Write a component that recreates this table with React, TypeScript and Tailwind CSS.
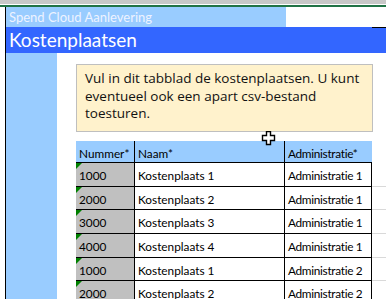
import React from 'react';

/* ------------------ Data ------------------ */
interface Row {
  nummer: string;
  naam: string;
  admin: string;
  h: string;
}

const rows: Row[] = [
  { nummer: '1000', naam: 'Kostenplaats 1', admin: 'Administratie 1', h: 'h-[24px]' },
  { nummer: '2000', naam: 'Kostenplaats 2', admin: 'Administratie 1', h: 'h-[23px]' },
  { nummer: '3000', naam: 'Kostenplaats 3', admin: 'Administratie 1', h: 'h-[24px]' },
  { nummer: '4000', naam: 'Kostenplaats 4', admin: 'Administratie 1', h: 'h-[24px]' },
  { nummer: '1000', naam: 'Kostenplaats 1', admin: 'Administratie 2', h: 'h-[23px]' },
  { nummer: '2000', naam: 'Kostenplaats 2', admin: 'Administratie 2', h: 'h-[24px]' },
];

/* ------------------ Cursor ------------------ */
function CellCursor() {
  return (
    <svg width="15" height="16" viewBox="0 0 15 16" className="absolute left-[261px] top-[131px]">
      <path
        d="M5.5 0.5 H9.5 V4.5 H13.5 V9.5 H9.5 V13.5 H5.5 V9.5 H1.5 V4.5 H5.5 Z"
        fill="#ffffff"
        stroke="#000000"
        strokeWidth="1.4"
      />
    </svg>
  );
}

/* ------------------ Tabel ------------------ */
function Table() {
  return (
    <div className="flex items-start">
      <div className="w-[296px] text-[11.8px] leading-[14px] text-black whitespace-nowrap">
        <div className="flex h-[22px] bg-[#99ccff] border-b border-black">
          <div className="w-[59px] border-r border-black pl-[3px] pt-[6px]">Nummer*</div>
          <div className="w-[150px] border-r border-black pl-[3px] pt-[6px]">Naam*</div>
          <div className="flex-1 pl-[3px] pt-[6px] tracking-[-0.3px]">Administratie*</div>
        </div>
        {rows.map((r, i) => (
          <div key={i} className={`flex border-b border-black ${r.h}`}>
            <div className="relative w-[59px] bg-[#c0c0c0] border-r border-black pl-[3px] pt-[6px]">
              <span className="absolute left-0 top-0 w-0 h-0 border-t-[6px] border-t-[#008000] border-r-[6px] border-r-transparent" />
              {r.nummer}
            </div>
            <div className="w-[150px] border-r border-black pl-[3px] pt-[6px]">{r.naam}</div>
            <div className="flex-1 border-r border-black pl-[3px] pt-[6px] tracking-[-0.3px]">{r.admin}</div>
          </div>
        ))}
      </div>
      <div className="flex-1 pt-[22px]">
        {rows.map((r, i) => (
          <div key={i} className={`border-b border-[#d9d9d9] ${r.h}`} />
        ))}
      </div>
    </div>
  );
}

/* ------------------ Pagina ------------------ */
export default function App() {
  return (
    <div
      className="relative w-[386px] h-[299px] overflow-hidden bg-white"
      style={{ fontFamily: 'Lato, "Open Sans", sans-serif' }}
    >
      <div className="h-[4px] bg-[#c8c8c8]" />
      <div className="h-[1px] bg-white" />
      <div className="h-[2px] bg-[#217346]" />

      <div className="flex h-[292px]">
        <div className="w-[5px] bg-white" />
        <div className="w-[1px] bg-black" />
        <div className="flex-1 flex flex-col">
          <div className="flex h-[20px]">
            <div className="w-[280px] bg-[#99ccff] text-[#eef3ff] text-[13px] leading-[20px] pl-[3px]">
              Spend Cloud Aanlevering
            </div>
          </div>
          <div className="relative h-[26px] bg-[#3366ff] text-white text-[19px] leading-[26px] pl-[3px]">
            Kostenplaatsen
            <div className="absolute right-0 top-0 w-[14px] h-[1px] bg-black" />
          </div>
          <div className="flex flex-1">
            <div className="w-[51px] bg-[#99ccff]" />
            <div className="flex-1 pl-[19px] pt-[11px]">
              <div
                className="w-[297px] h-[68px] bg-[#fff2cc] border border-[#bfbfbf] px-[8px] pt-[5px] text-[13.5px] leading-[17.5px] text-[#111111]"
                style={{ fontFamily: '"Open Sans", sans-serif' }}
              >
                Vul in dit tabblad de kostenplaatsen. U kunt eventueel ook een apart csv-bestand toesturen.
              </div>
              <div className="mt-[9px]">
                <Table />
              </div>
            </div>
          </div>
        </div>
      </div>
      <CellCursor />
    </div>
  );
}
